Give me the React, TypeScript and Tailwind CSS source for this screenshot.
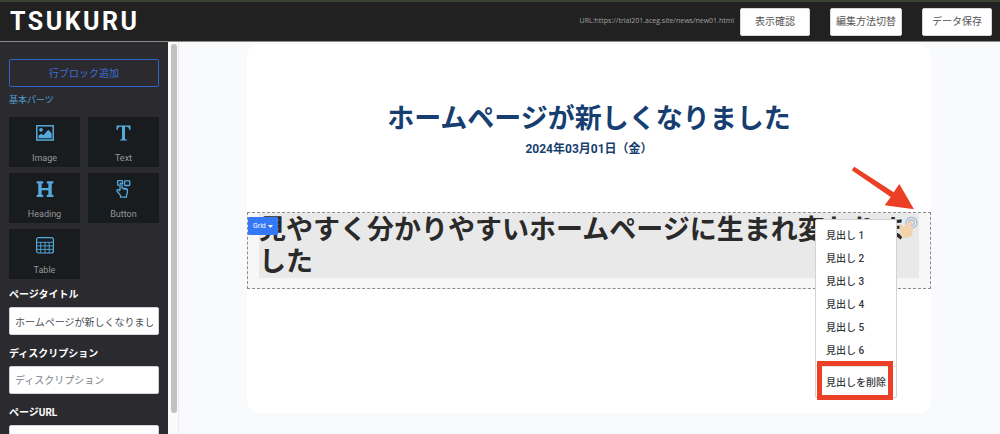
import React from "react";
import { FaHeading } from "react-icons/fa";

function ImageIcon() {
  return (
    <svg width="18" height="16" viewBox="0 0 18 16" fill="none" aria-hidden="true">
      <rect x="0.8" y="0.8" width="16.4" height="14.2" stroke="currentColor" strokeWidth="1.5" />
      <circle cx="5" cy="4.8" r="1.9" fill="currentColor" />
      <path d="M2.5 13.3V10.5L5.2 8.8L7.4 10.2L11.8 5.2H13L15.6 8.5V13.3Z" fill="currentColor" />
    </svg>
  );
}

function TextIcon() {
  return (
    <svg width="15" height="16" viewBox="0 0 15 16" fill="currentColor" aria-hidden="true">
      <path d="M.5 .5H14.5V5H13.3C13 2.700 12.300 1.800 10.500 1.800H9V13.300C9 14.300 9.600 14.600 11 14.700V15.600H4V14.700C5.400 14.600 6 14.300 6 13.300V1.800H4.500C2.700 1.800 2 2.700 1.700 5H.5Z" />
    </svg>
  );
}

function ButtonIcon() {
  return (
    <svg width="15" height="18" viewBox="0 0 15 18" fill="none" stroke="currentColor" strokeWidth="1.3" strokeLinejoin="round" aria-hidden="true">
      <path d="M3 5.300H2.200Q1.600 5.300 1.600 4.600V1.500Q1.600 .7 2.400 .7H5.800Q6.600 .7 6.600 1.500V4" />
      <rect x="8.600" y=".8" width="5.200" height="4.700" rx=".8" />
      <path d="M4 10.500V4.300Q4 3.200 5 3.200T6 4.300V8L10.200 8.700Q11.600 9 11.500 10.500L11.200 13.500L10.500 15V17.200H4.500V15.300L1.300 11.500Q.5 10.300 1.300 9.800T3 10L4 11.200M8 8.400V10M10 8.800V10.300" />
    </svg>
  );
}

function TableIcon() {
  return (
    <svg width="18" height="17" viewBox="0 0 18 17" fill="none" stroke="currentColor" aria-hidden="true">
      <rect x=".6" y=".6" width="16.800" height="15.400" rx="2" strokeWidth="1.200" />
      <path d="M.6 5.300H17.400M.6 8.900H17.400M.6 12.400H17.400M4.700 5.300V16M9 5.300V16M13.200 5.300V16" strokeWidth=".9" />
    </svg>
  );
}

function TouchIcon() {
  return (
    <svg width="20" height="23" viewBox="0 0 20 23" fill="none" aria-hidden="true">
      <circle cx="12.500" cy="6.800" r="5.500" stroke="#a9b4d3" strokeWidth="1.200" />
      <circle cx="12.500" cy="6.800" r="2.900" stroke="#a9b4d3" strokeWidth="1.100" />
      <path d="M.4 9.300C.4 7.700 2.300 7.400 2.900 8.700L4 11.300L11 5.700C12.900 4.400 14.700 6.600 13.100 8.100L10.400 10.700C12.800 10.500 14.200 11.300 13.900 13.700L13.300 18.500C12.900 20.600 8 22.800 4.700 21.700C2 20.800 .5 18.500 .5 15.500Z" fill="#f3d3ab" />
    </svg>
  );
}

const parts = [
  { label: "Image", icon: <ImageIcon /> },
  { label: "Text", icon: <TextIcon /> },
  { label: "Heading", icon: <FaHeading size={18} /> },
  { label: "Button", icon: <ButtonIcon /> },
  { label: "Table", icon: <TableIcon /> },
];

const headings = ["見出し 1", "見出し 2", "見出し 3", "見出し 4", "見出し 5", "見出し 6"];

function HeaderButton({ children }: { children: React.ReactNode }) {
  return (
    <button type="button" className="h-7 min-w-[70px] rounded-[2px] border border-[#d8d8d8] bg-white px-[5px] text-[10px] text-[#555]">
      {children}
    </button>
  );
}

function Field({ id, label, value, placeholder }: { id: string; label: string; value?: string; placeholder?: string }) {
  return (
    <div className="mb-[11px] flex flex-col gap-1">
      <label htmlFor={id} className="text-[10px] leading-4 font-bold text-white">
        {label}
      </label>
      <input
        id={id}
        type="text"
        defaultValue={value}
        placeholder={placeholder}
        className="h-7 w-full rounded-[2px] border border-[#ced4da] bg-white px-[5px] text-[10px] text-[#495057] placeholder:text-[#7b8187]"
      />
    </div>
  );
}

export default function App() {
  return (
    <div className="flex h-screen flex-col overflow-hidden bg-[#f8fafc] font-['Roboto','Noto_Sans_CJK_JP',sans-serif]">
      <header className="flex h-[42px] shrink-0 items-center border-t-2 border-b border-t-[#39432f] border-b-[#8b8b8b] bg-[#212121] pr-2 pl-[10px]">
        <a href="#" className="font-['Roboto',sans-serif] text-[25px] leading-8 font-bold tracking-widest text-white">
          TSUKURU
        </a>
        <span className="mr-[6px] ml-auto font-['Open_Sans',sans-serif] text-[7px] text-[#a0a0a0]">
          URL:https://trial201.aceg.site/news/new01.html
        </span>
        <div className="flex gap-5">
          <HeaderButton>表示確認</HeaderButton>
          <HeaderButton>編集方法切替</HeaderButton>
          <HeaderButton>データ保存</HeaderButton>
        </div>
      </header>

      <div className="flex min-h-0 flex-1">
        <aside className="w-[168px] shrink-0 overflow-hidden bg-[#2b2b2f] px-[9px] pt-[17px]">
          <button type="button" className="h-7 w-full rounded-[2px] border border-[#3064c6] text-[10px] text-[#3b70d6]">
            行ブロック追加
          </button>
          <h2 className="mt-[5px] text-[9px] leading-4 text-[#4c9fce]">基本パーツ</h2>
          <div className="mt-[9px] grid grid-cols-2 gap-x-2 gap-y-[6px]">
            {parts.map((part) => (
              <button
                key={part.label}
                type="button"
                className="flex h-[50px] flex-col items-center justify-between bg-[#181c1f] pt-[7px] pb-[3px] text-[#55a9dd]"
              >
                <span className="flex h-[18px] items-center">{part.icon}</span>
                <span className="text-[9px] leading-3 text-[#979797]">{part.label}</span>
              </button>
            ))}
          </div>
          <div className="mt-2">
            <Field id="page-title" label="ページタイトル" value="ホームページが新しくなりました" />
            <Field id="description" label="ディスクリプション" placeholder="ディスクリプション" />
            <Field id="page-url" label="ページURL" />
          </div>
        </aside>
        <div className="w-[11px] shrink-0 border-r border-[#ececec] bg-[#fafafa] pt-[2px] pr-px pb-[21px] pl-[3px]">
          <div className="h-full rounded-full bg-[#c1c1c1]" />
        </div>

        <main className="min-w-0 flex-1 pt-[2px] pr-[69px] pl-[68px]">
          <article className="rounded-xl bg-white pt-[57px] pb-[124px]">
            <h1 className="text-center text-[27px] leading-9 font-bold text-[#163e70]">ホームページが新しくなりました</h1>
            <p className="mt-[2px] text-center text-[12px] leading-5 font-bold text-[#163e70]">2024年03月01日（金）</p>

            <section className="relative mt-[53px] border border-dashed border-[#8c8c8c] bg-[#f7f7f7] px-[11px] pb-[10px]">
              <h2 className="bg-[#e9e9e9] pt-px text-[27px] leading-8 font-bold text-[#2a2a2a]">
                見やすく分かりやすいホームページに生まれ変わりました
              </h2>
              <button
                type="button"
                className="absolute top-1 left-0 flex h-[18px] items-center gap-[2px] rounded-[1px] bg-[#3478f6] px-[5px] text-[7px] text-white"
              >
                Grid
                <svg width="5" height="3" viewBox="0 0 5 3" fill="currentColor" aria-hidden="true">
                  <path d="M0 0H5L2.500 3Z" />
                </svg>
              </button>
              <button type="button" aria-label="見出しの操作" className="absolute top-[3px] right-[11px]">
                <TouchIcon />
              </button>
              <svg
                className="pointer-events-none absolute -top-12 right-[15px]"
                width="64"
                height="46"
                viewBox="0 0 64 46"
                fill="#eb4025"
                aria-hidden="true"
              >
                <path d="M3.300 1.700L42.700 27.300L48.300 19L63 44.300L33.700 40.300L39.700 32L.7 5.300Z" />
              </svg>
              <div className="absolute top-[6px] right-[33px] w-[82px] rounded-[2px] border border-[#d2d2d2] bg-white pt-1 text-[10px] font-medium text-[#33383d]">
                {headings.map((label) => (
                  <button key={label} type="button" className="block h-[23px] w-full px-[10px] text-left">
                    {label}
                  </button>
                ))}
                <hr className="mt-1 border-[#e3e3e3]" />
                <button type="button" className="block h-[30px] w-full px-[10px] text-left whitespace-nowrap">
                  見出しを削除
                </button>
                <div className="pointer-events-none absolute -bottom-[3px] left-px h-[39px] w-[76px] border-[5px] border-[#eb4025]" />
              </div>
            </section>
          </article>
        </main>
      </div>
    </div>
  );
}
